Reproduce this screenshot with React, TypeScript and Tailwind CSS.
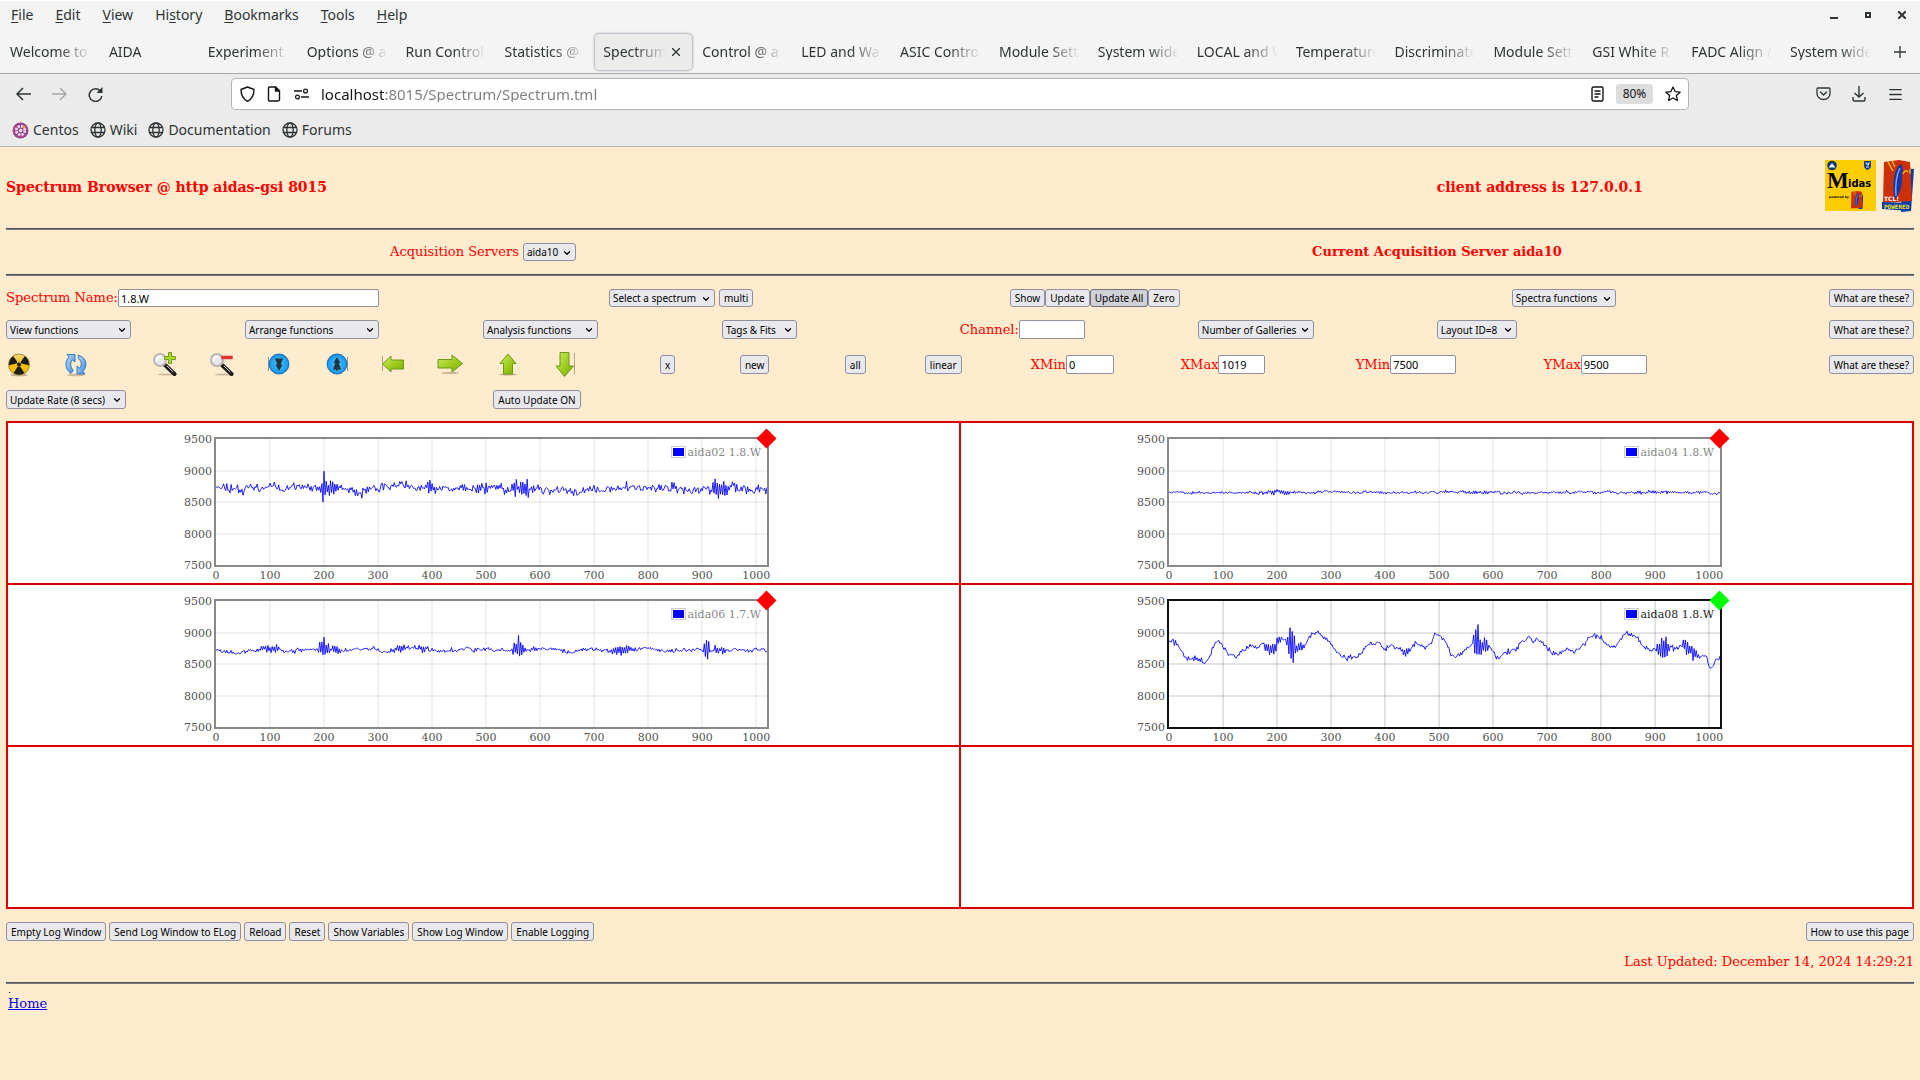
import { useId, type ReactNode } from "react";
import { ChevronDown, Menu } from "lucide-react";

type Pt = [number, number];

function interp(points: Pt[], x: number): number {
  if (x <= points[0][0]) return points[0][1];
  for (let i = 1; i < points.length; i++) {
    const [x1, y1] = points[i];
    if (x <= x1) {
      const [x0, y0] = points[i - 1];
      return y0 + ((x - x0) / (x1 - x0)) * (y1 - y0);
    }
  }
  return points[points.length - 1][1];
}

interface Burst {
  at: number;
  width: number;
  up: number;
  down: number;
}

interface Trace {
  seed: number;
  noise: number;
  base: Pt[];
  bursts: Burst[];
}

// Builds the trace in channel / count units from a base line, noise and bursts.
function buildTrace({ seed, noise, base, bursts }: Trace): Pt[] {
  let s = seed;
  const rnd = () => {
    s = (s * 1664525 + 1013904223) % 4294967296;
    return s / 4294967296;
  };
  const out: Pt[] = [];
  let slow = 0;
  for (let x = 0; x <= 1020; x += 2) {
    slow = slow * 0.7 + (rnd() - 0.5) * noise * 0.8;
    const high = (x / 2) % 2 === 0;
    let y = interp(base, x) + slow + (rnd() - 0.5) * noise * 1.4 + (high ? 1 : -1) * rnd() * noise * 0.35;
    for (const b of bursts) {
      const d = Math.abs(x - b.at) / b.width;
      if (d < 1) {
        const k = (1 - d * d) * (0.45 + rnd() * 0.6);
        y += high ? b.up * k : -b.down * k;
      }
    }
    out.push([x, y]);
  }
  return out;
}

const aida02: Trace = {
  seed: 11,
  noise: 72,
  base: [[0, 8770], [50, 8710], [100, 8760], [140, 8740], [190, 8720], [250, 8710], [300, 8720], [340, 8730], [390, 8690], [420, 8700], [500, 8720], [560, 8710], [640, 8700], [700, 8680], [770, 8740], [850, 8710], [900, 8700], [960, 8730], [1010, 8710], [1020, 8640]],
  bursts: [
    { at: 200, width: 4, up: 210, down: 100 },
    { at: 208, width: 22, up: 110, down: 140 },
    { at: 260, width: 20, up: 30, down: 50 },
    { at: 400, width: 12, up: 70, down: 40 },
    { at: 496, width: 12, up: 70, down: 80 },
    { at: 566, width: 22, up: 110, down: 110 },
    { at: 846, width: 8, up: 70, down: 50 },
    { at: 926, width: 10, up: 150, down: 90 },
    { at: 940, width: 12, up: 100, down: 130 },
  ],
};

const aida04: Trace = {
  seed: 5,
  noise: 24,
  base: [[0, 8650], [300, 8655], [600, 8650], [1020, 8650]],
  bursts: [
    { at: 200, width: 50, up: 26, down: 26 },
    { at: 570, width: 30, up: 14, down: 14 },
    { at: 900, width: 60, up: 14, down: 14 },
  ],
};

const aida06: Trace = {
  seed: 23,
  noise: 34,
  base: [[0, 8730], [40, 8680], [90, 8740], [130, 8720], [180, 8740], [240, 8720], [280, 8750], [310, 8700], [370, 8760], [420, 8700], [460, 8750], [520, 8700], [560, 8740], [610, 8750], [650, 8690], [700, 8740], [740, 8710], [800, 8740], [850, 8720], [920, 8720], [980, 8720], [1020, 8720]],
  bursts: [
    { at: 100, width: 20, up: 60, down: 50 },
    { at: 200, width: 12, up: 210, down: 110 },
    { at: 222, width: 14, up: 50, down: 60 },
    { at: 340, width: 20, up: 50, down: 40 },
    { at: 384, width: 12, up: 60, down: 50 },
    { at: 560, width: 12, up: 170, down: 150 },
    { at: 750, width: 30, up: 50, down: 50 },
    { at: 908, width: 8, up: 190, down: 130 },
    { at: 930, width: 16, up: 50, down: 50 },
  ],
};

const aida08: Trace = {
  seed: 42,
  noise: 46,
  base: [[0, 8890], [12, 8830], [19, 8745], [26, 8640], [37, 8585], [48, 8610], [60, 8560], [67, 8520], [76, 8620], [85, 8830], [92, 8865], [101, 8745], [114, 8665], [125, 8620], [136, 8705], [151, 8780], [162, 8750], [173, 8840], [184, 8760], [195, 8770], [202, 8870], [210, 8925], [217, 8900], [224, 8850], [232, 8800], [246, 8740], [253, 8800], [261, 8955], [268, 9010], [279, 8990], [286, 8890], [297, 8840], [308, 8720], [319, 8640], [330, 8595], [345, 8580], [352, 8620], [363, 8780], [374, 8825], [385, 8825], [400, 8745], [411, 8790], [422, 8755], [433, 8680], [444, 8690], [459, 8825], [470, 8770], [484, 8820], [493, 8970], [499, 8970], [506, 8920], [514, 8825], [523, 8640], [532, 8600], [543, 8655], [554, 8770], [565, 8825], [583, 8825], [594, 8770], [605, 8610], [611, 8560], [618, 8680], [634, 8715], [644, 8735], [653, 8840], [664, 8915], [675, 8865], [686, 8870], [697, 8770], [708, 8685], [719, 8655], [730, 8700], [741, 8730], [752, 8695], [766, 8795], [777, 8930], [786, 8970], [799, 8900], [814, 8785], [823, 8735], [834, 8865], [847, 8965], [858, 8980], [867, 8940], [876, 8795], [887, 8730], [894, 8700], [905, 8745], [915, 8740], [927, 8770], [940, 8760], [949, 8825], [957, 8800], [968, 8715], [979, 8640], [990, 8620], [997, 8560], [1003, 8410], [1008, 8455], [1015, 8570], [1020, 8600]],
  bursts: [
    { at: 48, width: 12, up: 50, down: 50 },
    { at: 192, width: 18, up: 80, down: 110 },
    { at: 226, width: 10, up: 200, down: 280 },
    { at: 240, width: 12, up: 70, down: 70 },
    { at: 440, width: 10, up: 50, down: 60 },
    { at: 568, width: 6, up: 330, down: 140 },
    { at: 578, width: 16, up: 120, down: 150 },
    { at: 915, width: 14, up: 190, down: 210 },
    { at: 956, width: 8, up: 140, down: 80 },
    { at: 970, width: 18, up: 70, down: 110 },
  ],
};

const X0 = 34;
const X1 = 585;
const Y0 = 16;
const Y1 = 142;
const px = (v: number) => X0 + (v / 1020) * (X1 - X0);
const py = (v: number) => Y1 - ((v - 7500) / 2000) * (Y1 - Y0);

function Chart({ name, trace, active = false }: { name: string; trace: Trace; active?: boolean }) {
  const points = buildTrace(trace).map(([x, y]) => `${px(x).toFixed(1)},${py(y).toFixed(1)}`).join(" ");
  const xs = [0, 100, 200, 300, 400, 500, 600, 700, 800, 900, 1000];
  const ys = [7500, 8000, 8500, 9000, 9500];
  return (
    <svg width="604" height="160" viewBox="0 0 604 160" role="img" aria-label={name} className="font-['DejaVu_Serif',serif] text-[11px]">
      <g stroke="#000" strokeOpacity={active ? 0.11 : 0.055} strokeWidth="2">
        {xs.slice(1).map((v) => <line key={v} x1={Math.round(px(v))} x2={Math.round(px(v))} y1={Y0} y2={Y1} />)}
        {ys.slice(1, 4).map((v) => <line key={v} x1={X0} x2={X1} y1={Math.round(py(v))} y2={Math.round(py(v))} />)}
      </g>
      <polyline points={points} fill="none" stroke="#0000ff" strokeOpacity="0.85" strokeWidth="1" strokeLinejoin="round" />
      <rect x={X0 - 1} y={Y0 - 1} width={X1 - X0 + 2} height={Y1 - Y0 + 2} fill="none" stroke={active ? "#111111" : "#888888"} strokeWidth="2" />
      <g fill="#545454">
        {xs.map((v) => <text key={v} x={px(v)} y="156" textAnchor="middle">{v}</text>)}
        {ys.map((v) => <text key={v} x="30" y={py(v) + 4} textAnchor="end">{v}</text>)}
      </g>
      <rect x="489.500" y="23.500" width="14" height="11" fill="#fff" stroke="#ccc" />
      <rect x="491" y="25" width="11" height="8" fill="#0000ff" />
      <text x="579" y="33" textAnchor="end" fill={active ? "#222222" : "#888888"}>{name}</text>
      <path d="M584.500 5.500 L594.500 15.500 L584.500 25.500 L574.500 15.500 Z" fill={active ? "#00ff00" : "#ff0000"} />
    </svg>
  );
}

const box = "rounded-[3px] border font-['Noto_Sans',sans-serif] text-[10px] leading-4 text-black whitespace-nowrap";
const idle = "border-[#8f8f9d] bg-[#e9e9ed]";

function Btn({ children, pressed = false, tall = false }: { children: ReactNode; pressed?: boolean; tall?: boolean }) {
  return (
    <button type="button" className={`${box} px-1 ${tall ? "h-[19px]" : "h-[18px]"} ${pressed ? "border-[#6f6f7d] bg-[#d0d0d7]" : idle}`}>
      {children}
    </button>
  );
}

function Drop({ label, width, tall = false, id }: { label: string; width: string; tall?: boolean; id?: string }) {
  return (
    <span className={`relative inline-flex text-black ${width}`}>
      <select id={id} aria-label={id ? undefined : label} className={`${box} ${idle} w-full appearance-none pl-[3px] ${tall ? "h-[19px]" : "h-[18px]"}`}>
        <option>{label}</option>
      </select>
      <ChevronDown size={10} strokeWidth={3} className="pointer-events-none absolute top-[5px] right-1" />
    </span>
  );
}

function Field({ label, value, width, tall = false }: { label: string; value: string; width: string; tall?: boolean }) {
  const id = useId();
  return (
    <span className="flex items-center whitespace-nowrap">
      <label htmlFor={id}>{label}</label>
      <input id={id} defaultValue={value} className={`rounded-[2px] border border-[#8f8f9d] bg-white px-[2px] font-['Noto_Sans',sans-serif] text-[11px] text-black ${tall ? "h-[19px]" : "h-[18px]"} ${width}`} />
    </span>
  );
}

function IconButton({ label, children }: { label: string; children: ReactNode }) {
  return (
    <button type="button" aria-label={label} className="flex h-[27px] w-[26px] items-start">
      <svg width="26" height="26" viewBox="0 0 26 26">{children}</svg>
    </button>
  );
}

function Radiation() {
  return (
    <IconButton label="Zero all">
      <ellipse cx="13" cy="24" rx="9" ry="1.500" fill="#a08c70" opacity=".6" />
      <circle cx="13" cy="13.500" r="10.500" fill="url(#yellow)" stroke="#8f7420" strokeWidth=".8" />
      <g fill="#1c1c18">
        <path d="M10.500 12.600 L3 14.200 A10 10 0 0 1 7.300 5.300 L11.500 11.300Z" />
        <path d="M15.500 12.600 L23 14.200 A10 10 0 0 0 18.700 5.300 L14.500 11.300Z" />
        <path d="M11.800 15.500 L7.500 22 A10 10 0 0 0 18.500 22 L14.200 15.500Z" />
        <circle cx="13" cy="13.400" r="2" />
      </g>
    </IconButton>
  );
}

function RefreshArrows() {
  return (
    <IconButton label="Refresh">
      <ellipse cx="13" cy="24" rx="9" ry="1.300" fill="#a08c70" opacity=".5" />
      <g fill="url(#sky)" stroke="#2a6fc0" strokeWidth=".9" strokeLinejoin="round">
        <path d="M4 3.500 H12 V11 L9.500 8.800 C6.800 12 7.300 16 10.300 19.500 L8 22.500 C2 18 1.200 11 6 5.800Z" />
        <path d="M22 23 H14 V15 L16.500 17.200 C19.200 14 18.700 10 15.300 7.500 L15.300 4 C24 7 24.800 15 20 20.500Z" />
      </g>
    </IconButton>
  );
}

function Magnifier({ plus }: { plus: boolean }) {
  return (
    <IconButton label={plus ? "Zoom in" : "Zoom out"}>
      <ellipse cx="16" cy="23.500" rx="9" ry="1" fill="#a08c70" opacity=".5" />
      <path d="M14 14 L23.500 23" stroke="#1a1a1a" strokeWidth="4" strokeLinecap="round" />
      <path d="M16 15 L22 20.800" stroke="#d8d8d8" strokeWidth="1" strokeLinecap="round" />
      <circle cx="9" cy="9" r="6" fill="#e8e8ec" stroke="#b9b4b0" strokeWidth="2" />
      <path d="M5.500 10 A4 4 0 0 1 10 5.500" stroke="#fff" strokeWidth="2" fill="none" />
      {plus ? (
        <path d="M17.500 1.500 h3 v4 h4 v3 h-4 v4 h-3 v-4 h-4 v-3 h4Z" fill="#a8d820" stroke="#5c8c10" strokeWidth=".8" />
      ) : (
        <rect x="13.500" y="5" width="11" height="3" fill="#ee2c2c" stroke="#c85050" strokeWidth=".6" />
      )}
    </IconButton>
  );
}

function BlueDisc({ up }: { up: boolean }) {
  return (
    <IconButton label={up ? "Expand" : "Contract"}>
      <path d={up ? "M24.500 6v14" : "M2.500 6v14"} stroke="#6c5c4c" strokeWidth="1" opacity=".6" />
      <g transform={up ? "translate(1 0)" : undefined}>
        <circle cx="13" cy="13" r="9.800" fill="url(#disc)" stroke="#1670c0" strokeWidth="1.200" />
        <path d={up ? "M13 6 L16.500 12 H14.700 L17 18.500 H14 V19.500 H12 V18.500 H9 L11.300 12 H9.500Z" : "M13 20 L9.500 13.500 H11.300 L9 7.500 H17 L14.700 13.500 H16.500Z"} fill="#28323c" />
      </g>
    </IconButton>
  );
}

function GreenArrow({ dir }: { dir: "left" | "right" | "up" | "down" }) {
  const shapes = {
    left: "M2.500 13 L11 5 V9 H23.500 V18 H11 V21Z",
    right: "M25.500 12.500 L15 4 V8.500 H1 V17 H15 V21Z",
    up: "M13 3 L21 12.500 H17.500 V23 H8.500 V12.500 H5Z",
    down: "M12.500 25.500 L4 15 H8 V1.500 H17 V15 H21.500Z",
  };
  return (
    <IconButton label={`Move ${dir}`}>
      {(dir === "right" || dir === "up") && <ellipse cx="13" cy={dir === "up" ? 23.5 : 22} rx="9" ry="1" fill="#a08c70" opacity=".6" />}
      {(dir === "left" || dir === "down") && <path d={dir === "left" ? "M2.500 5v15" : "M22.500 2v21"} stroke="#6c5c4c" opacity=".5" />}
      <path d={shapes[dir]} fill="url(#green)" stroke="#6c9818" strokeWidth="1" strokeLinejoin="round" />
    </IconButton>
  );
}

function Gradients() {
  return (
    <svg width="0" height="0" className="absolute" aria-hidden="true">
      <defs>
        <linearGradient id="yellow" x1="0" y1="0" x2="0" y2="1"><stop offset="0" stopColor="#f3dc80" /><stop offset=".5" stopColor="#f2b90c" /><stop offset="1" stopColor="#f8c800" /></linearGradient>
        <linearGradient id="sky" x1="0" y1="0" x2="1" y2="1"><stop offset="0" stopColor="#b8dcf8" /><stop offset="1" stopColor="#3c8ce0" /></linearGradient>
        <radialGradient id="disc"><stop offset="0" stopColor="#3cc4ff" /><stop offset="1" stopColor="#1c98ec" /></radialGradient>
        <linearGradient id="green" x1="0" y1="0" x2="1" y2="1"><stop offset="0" stopColor="#d0ec60" /><stop offset=".6" stopColor="#98c818" /><stop offset="1" stopColor="#78ac08" /></linearGradient>
      </defs>
    </svg>
  );
}

function TclArt() {
  return (
    <g>
      <path d="M22 8 L33 9 L30 51 L20 52Z" fill="#0c3ca8" />
      <path d="M3 2 L18 0 L29 2 L31 41 L2 43Z" fill="#cc3008" />
      <path d="M14 40 C11 28 12 8 20 4 C24 10 20 14 21 22 C20 30 18 34 14 40Z" fill="#1438a8" />
      <path d="M15 36 C14 24 16 14 19 8" stroke="#7ca0f0" strokeWidth="1.500" fill="none" />
      <path d="M7 2 L12 11 M11 1 L14 7 M22 14 C23 11 25 10 27 12 M29 9 V14" stroke="#f8c400" strokeWidth="1.300" fill="none" />
    </g>
  );
}

function MidasLogo() {
  return (
    <svg width="51" height="51" viewBox="0 0 51 51" role="img" aria-label="Midas powered by Tcl">
      <rect width="51" height="51" fill="#fccc04" />
      <circle cx="7" cy="5.500" r="4.800" fill="#103870" />
      <path d="M3.500 7.500 L7 3 L10.500 7.500Z" fill="#e4ecf4" />
      <path d="M39 1 H46 V6 C46 8 44 9.500 42.500 10 C41 9.500 39 8 39 6Z" fill="#183c90" />
      <path d="M40.500 3 h1.500 v2 h1.500 v-2 h1.500 M41 7 h3" stroke="#d8e0f4" fill="none" />
      <text x="2" y="28" className="font-['Liberation_Serif',serif] text-[23px] font-bold">M</text>
      <text x="23" y="27" className="font-['DejaVu_Sans',sans-serif] text-[10px] font-bold">idas</text>
      <text x="4" y="38" className="font-['DejaVu_Sans',sans-serif] text-[3px] font-bold">powered by</text>
      <svg x="26" y="31" width="12" height="18" viewBox="2 0 30 44" preserveAspectRatio="none"><TclArt /></svg>
    </svg>
  );
}

function TclLogo() {
  return (
    <svg width="33" height="52" viewBox="0 0 33 52" role="img" aria-label="Tcl powered">
      <TclArt />
      <path d="M1 42 L30 43 L29 51 L1 49Z" fill="#0c3ca8" />
      <text x="3" y="41" className="font-['DejaVu_Sans',sans-serif] text-[6px]" fill="#fff">TCL!</text>
      <text x="3" y="49" className="font-['DejaVu_Sans_Mono',monospace] text-[6px] font-bold" fill="#f4e41c">POWERED</text>
    </svg>
  );
}

function Globe() {
  return (
    <svg width="16" height="16" viewBox="0 0 16 16" fill="none" stroke="#2e3436" strokeWidth="1.300">
      <circle cx="8" cy="8" r="7" /><ellipse cx="8" cy="8" rx="3.200" ry="7" /><path d="M1.500 5.500h13M1.500 10.500h13" />
    </svg>
  );
}

function CentosIcon() {
  return (
    <svg width="17" height="17" viewBox="0 0 17 17">
      <circle cx="8.500" cy="8.500" r="8" fill="#a0468c" />
      <circle cx="8.500" cy="8.500" r="4.300" fill="none" stroke="#f4e4f0" strokeWidth="2.600" strokeDasharray="2.200 1.177" />
      <circle cx="8.500" cy="8.500" r="1.800" fill="#f4e4f0" />
      <path d="M10 4 h3 v3z" fill="#f0a030" />
    </svg>
  );
}

const menus = ["File", "Edit", "View", "History", "Bookmarks", "Tools", "Help"];
const tabs = ["Welcome to", "AIDA", "Experiment C", "Options @ a", "Run Control", "Statistics @", "Spectrum", "Control @ a", "LED and Wa", "ASIC Contro", "Module Sett", "System wide", "LOCAL and W", "Temperature", "Discriminato", "Module Sett", "GSI White R", "FADC Align &", "System wide"];

function BrowserChrome() {
  return (
    <header className="border-b border-[#b4b4b4] bg-[#ebebeb] font-['Noto_Sans',sans-serif] text-[14px] text-[#2e3436]">
      <div className="border-t border-white bg-[#f4f4f4]">
        <div className="flex h-7 items-center justify-between pr-[14px] pl-[11px]">
          <nav className="flex gap-[22px]">
            {menus.map((m) => (
              <button type="button" key={m}>
                {m === "History" ? <>Hi<u className="underline-offset-2">s</u>tory</> : <><u className="underline-offset-2">{m[0]}</u>{m.slice(1)}</>}
              </button>
            ))}
          </nav>
          <div className="flex items-center gap-[26px]">
            <button type="button" aria-label="Minimise"><svg width="8" height="8"><path d="M0 6h8v2H0z" fill="#2e3436" /></svg></button>
            <button type="button" aria-label="Restore"><svg width="8" height="8"><path d="M2 2h4v4h-4z" fill="none" stroke="#2e3436" strokeWidth="2" /></svg></button>
            <button type="button" aria-label="Close window"><svg width="8" height="8"><path d="M0 0l8 8M8 0l-8 8" stroke="#2e3436" strokeWidth="2" /></svg></button>
          </div>
        </div>
        <div className="flex h-[45px] items-center border-b border-[#a8a8ac] pt-[2px] pl-[1px]">
          <div role="tablist" className="grid flex-1 grid-cols-19">
            {tabs.map((t, i) => {
              const active = i === 6;
              return (
                <div key={i} role="tab" aria-selected={active} className={`mx-[1px] flex h-9 items-center gap-[6px] rounded-[4px] pl-2 ${active ? "bg-[#ebebeb] pr-3 shadow-[0_0_2px_1px_#b4b4c0]" : "pr-2"}`}>
                  <span className="min-w-0 flex-1 overflow-hidden whitespace-nowrap [mask-image:linear-gradient(to_left,transparent,black_32px)]">{t}</span>
                  {active && <button type="button" aria-label="Close tab"><svg width="8" height="8"><path d="M0 0l8 8M8 0l-8 8" stroke="#2e3436" strokeWidth="1.300" /></svg></button>}
                </div>
              );
            })}
          </div>
          <button type="button" aria-label="New tab" className="flex w-[40px] justify-center"><svg width="12" height="12"><path d="M6 0v12M0 6h12" stroke="#2e3436" strokeWidth="1.300" /></svg></button>
        </div>
      </div>
      <div className="flex h-10 items-center px-4">
        <div className="flex w-[215px] items-center gap-[21px]">
          <button type="button" aria-label="Back"><svg width="15" height="14" fill="none" stroke="#2e3436" strokeWidth="1.500"><path d="M15 7H1M7 1L1 7l6 6" /></svg></button>
          <button type="button" aria-label="Forward"><svg width="15" height="14" fill="none" stroke="#a8a8a8" strokeWidth="1.500"><path d="M0 7h14M8 1l6 6-6 6" /></svg></button>
          <button type="button" aria-label="Reload"><svg width="15" height="15" fill="none" stroke="#2e3436" strokeWidth="1.500"><path d="M12.700 4.500A6.300 6.300 0 1 0 13.800 9" /><path d="M14.500 0v6h-6z" fill="#2e3436" stroke="none" /></svg></button>
        </div>
        <div className="flex h-8 flex-1 items-center gap-3 rounded-[4px] border border-[#b4b4b8] bg-white pr-[7px] pl-2">
          <svg width="15" height="16" fill="none" stroke="#15141a" strokeWidth="1.400" strokeLinejoin="round"><path d="M7.500 1 L14 3.500 C14 9 12 13 7.500 15.300 C3 13 1 9 1 3.500Z" /></svg>
          <svg width="14" height="16" fill="none" stroke="#15141a" strokeWidth="1.400" strokeLinejoin="round"><path d="M2.500 1h6l4 4v8.500a1.500 1.500 0 0 1-1.500 1.500h-8.500a1 1 0 0 1-1-1v-12a1 1 0 0 1 1-1z" /><path d="M8.500 1v4h4z" fill="#15141a" /></svg>
          <svg width="16" height="12" fill="none" stroke="#15141a" strokeWidth="1.300"><path d="M1 3h8M8 9h8" /><circle cx="12.500" cy="3" r="1.900" /><circle cx="4.500" cy="9" r="1.900" /></svg>
          <input aria-label="Address" defaultValue="localhost:8015/Spectrum/Spectrum.tml" className="min-w-0 flex-1 bg-[linear-gradient(90deg,#15141a_63px,#7c7c80_63px)] bg-clip-text text-[15px] text-transparent outline-none" />
          <svg width="13" height="16" fill="none" stroke="#15141a" strokeWidth="1.400"><rect x="1" y="1" width="11" height="14" rx="1.500" /><path d="M3.500 5h6M3.500 8h6M3.500 11h4" /></svg>
          <button type="button" className="h-5 w-[37px] rounded-[3px] bg-[#dddddd] text-[12px] leading-5 text-[#15141a]">80%</button>
          <button type="button" aria-label="Bookmark page"><svg width="16" height="16" fill="none" stroke="#15141a" strokeWidth="1.300" strokeLinejoin="round"><path d="M8 1l2.100 4.600 5 .6-3.700 3.400 1 4.900L8 12l-4.400 2.500 1-4.900L.9 6.200l5-.6z" /></svg></button>
        </div>
        <div className="flex w-[215px] items-center justify-end gap-[21px]">
          <button type="button" aria-label="Pocket"><svg width="15" height="14" fill="none" stroke="#2e3436" strokeWidth="1.300" strokeLinecap="round"><path d="M2 1h11a1 1 0 0 1 1 1v4.500a6.500 6 0 0 1-13 0V2a1 1 0 0 1 1-1zM4.500 5l3 3 3-3" /></svg></button>
          <button type="button" aria-label="Downloads"><svg width="14" height="16" fill="none" stroke="#2e3436" strokeWidth="1.400"><path d="M7 0v11M2.500 7L7 11l4.500-4M1 11v2.500q0 1.500 1.500 1.500h9q1.500 0 1.500-1.500V11" /></svg></button>
          <button type="button" aria-label="Menu"><Menu size={17} strokeWidth={1.800} /></button>
        </div>
      </div>
      <nav className="flex h-8 items-center gap-[11px] pl-3">
        <a href="#centos" className="flex items-center gap-1"><CentosIcon />Centos</a>
        <a href="#wiki" className="flex items-center gap-1"><Globe />Wiki</a>
        <a href="#documentation" className="flex items-center gap-1"><Globe />Documentation</a>
        <a href="#forums" className="flex items-center gap-1"><Globe />Forums</a>
      </nav>
    </header>
  );
}

function Rule() {
  return <hr className="h-[2px] border-0 border-t border-[#505054] bg-[#7c7c80]" />;
}

export default function App() {
  return (
    <div className="min-h-screen bg-[#ffebcd] font-['DejaVu_Serif',serif] text-[13px] leading-4 text-[#ff0000]">
      <Gradients />
      <BrowserChrome />
      <main className="px-[6px]">
        <div className="grid h-[81px] grid-cols-[1248fr_570fr_89fr] items-center pb-[2px] text-[14px] font-bold">
          <h1>Spectrum Browser @ http aidas-gsi 8015</h1>
          <p className="text-center">client address is 127.0.0.1</p>
          <div className="flex items-center justify-end gap-[5px] pb-[2px]"><MidasLogo /><TclLogo /></div>
        </div>
        <Rule />
        <div className="grid h-[44px] grid-cols-2 items-center pb-[1px] text-center">
          <div className="flex items-center justify-center gap-1">
            <label htmlFor="server">Acquisition Servers</label>
            <Drop id="server" label="aida10" width="w-[53px]" />
          </div>
          <p className="font-bold">Current Acquisition Server aida10</p>
        </div>
        <Rule />
        <div className="mt-[13px] grid grid-cols-[603fr_401fr_502fr_317fr_84fr] items-center">
          <Field label="Spectrum Name:" value="1.8.W" width="w-[261px]" />
          <div className="flex gap-1"><Drop label="Select a spectrum" width="w-[106px]" /><Btn>multi</Btn></div>
          <div className="flex"><Btn>Show</Btn><Btn>Update</Btn><Btn pressed>Update All</Btn><Btn>Zero</Btn></div>
          <Drop label="Spectra functions" width="w-[104px]" />
          <div className="flex justify-end"><Btn>What are these?</Btn></div>
        </div>
        <div className="mt-[13px] grid grid-cols-[239fr_238fr_239fr_238fr_238fr_239fr_392fr_84fr] items-center">
          <Drop label="View functions" width="w-[125px]" tall />
          <Drop label="Arrange functions" width="w-[134px]" tall />
          <Drop label="Analysis functions" width="w-[115px]" tall />
          <Drop label="Tags &amp; Fits" width="w-[75px]" tall />
          <Field label="Channel:" value="" width="w-[66px]" tall />
          <Drop label="Number of Galleries" width="w-[116px]" tall />
          <Drop label="Layout ID=8" width="w-[80px]" tall />
          <div className="flex justify-end"><Btn tall>What are these?</Btn></div>
        </div>
        <div className="mt-3 grid grid-cols-[57fr_88fr_57fr_58fr_57fr_57fr_57fr_58fr_57fr_108fr_80fr_105fr_80fr_106fr_150fr_175fr_188fr_285fr_84fr] items-center justify-items-start">
          <Radiation />
          <RefreshArrows />
          <Magnifier plus />
          <Magnifier plus={false} />
          <BlueDisc up={false} />
          <BlueDisc up />
          <GreenArrow dir="left" />
          <GreenArrow dir="right" />
          <GreenArrow dir="up" />
          <GreenArrow dir="down" />
          <Btn tall>x</Btn>
          <Btn tall>new</Btn>
          <Btn tall>all</Btn>
          <Btn tall>linear</Btn>
          <Field label="XMin" value="0" width="w-[48px]" tall />
          <Field label="XMax" value="1019" width="w-[47px]" tall />
          <Field label="YMin" value="7500" width="w-[66px]" tall />
          <Field label="YMax" value="9500" width="w-[66px]" tall />
          <div className="flex justify-self-end"><Btn tall>What are these?</Btn></div>
        </div>
        <div className="mt-3 grid grid-cols-[487fr_1420fr]">
          <Drop label="Update Rate (8 secs)" width="w-[120px]" tall />
          <div className="flex"><Btn tall>Auto Update ON</Btn></div>
        </div>
        <div className="mt-3 grid auto-rows-[160px] grid-cols-2 gap-[2px] border-2 border-[#dd0000] bg-[#dd0000]">
          <div className="flex justify-center bg-white"><Chart name="aida02 1.8.W" trace={aida02} /></div>
          <div className="flex justify-center bg-white"><Chart name="aida04 1.8.W" trace={aida04} /></div>
          <div className="flex justify-center bg-white"><Chart name="aida06 1.7.W" trace={aida06} /></div>
          <div className="flex justify-center bg-white"><Chart name="aida08 1.8.W" trace={aida08} active /></div>
          <div className="bg-white" />
          <div className="bg-white" />
        </div>
        <div className="mt-[13px] flex justify-between">
          <div className="flex gap-[3px]">
            {["Empty Log Window", "Send Log Window to ELog", "Reload", "Reset", "Show Variables", "Show Log Window", "Enable Logging"].map((b) => <Btn key={b} tall>{b}</Btn>)}
          </div>
          <Btn tall>How to use this page</Btn>
        </div>
        <p className="mt-[13px] mb-3 text-right">Last Updated: December 14, 2024 14:29:21</p>
        <Rule />
        <div className="px-[2px] text-black">
          <p className="h-3 text-[10px] leading-3">.</p>
          <a href="#home" className="text-[#0000ee] underline">Home</a>
        </div>
      </main>
    </div>
  );
}
